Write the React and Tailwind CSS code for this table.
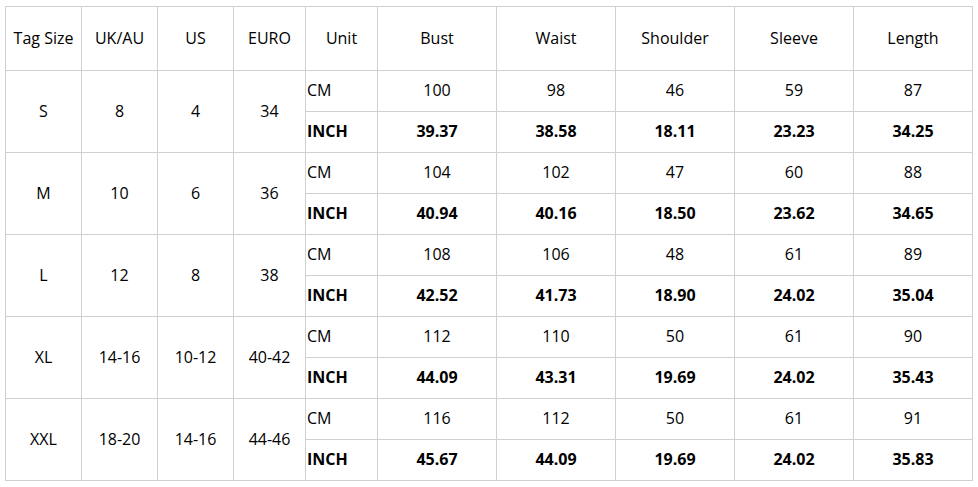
import React from 'react';

const headers = ["Tag Size", "UK/AU", "US", "EURO", "Unit", "Bust", "Waist", "Shoulder", "Sleeve", "Length"];

const sizes = [
  { tag: "S", uk: "8", us: "4", euro: "34", cm: ["100", "98", "46", "59", "87"], inch: ["39.37", "38.58", "18.11", "23.23", "34.25"] },
  { tag: "M", uk: "10", us: "6", euro: "36", cm: ["104", "102", "47", "60", "88"], inch: ["40.94", "40.16", "18.50", "23.62", "34.65"] },
  { tag: "L", uk: "12", us: "8", euro: "38", cm: ["108", "106", "48", "61", "89"], inch: ["42.52", "41.73", "18.90", "24.02", "35.04"] },
  { tag: "XL", uk: "14-16", us: "10-12", euro: "40-42", cm: ["112", "110", "50", "61", "90"], inch: ["44.09", "43.31", "19.69", "24.02", "35.43"] },
  { tag: "XXL", uk: "18-20", us: "14-16", euro: "44-46", cm: ["116", "112", "50", "61", "91"], inch: ["45.67", "44.09", "19.69", "24.02", "35.83"] },
];

const cell = "border-l border-t border-[#d0d0d0] flex items-center justify-center pb-[2px]";

export default function App() {
  return (
    <div className="w-[978px] h-[487px] bg-white overflow-hidden pt-[6px] pl-[5px]" style={{ fontFamily: '"Open Sans", "Noto Sans", sans-serif' }}>
      <div className="grid grid-cols-[76px_76px_76px_72px_72px_119px_119px_119px_119px_119px] grid-rows-[64px_repeat(10,41px)] w-[968px] border-r border-b border-[#d0d0d0] text-[16px] text-black">
        {headers.map((h) => (
          <div key={h} className={cell}>{h}</div>
        ))}
        {sizes.map((s) => (
          <React.Fragment key={s.tag}>
            <div className={`${cell} row-span-2`}>{s.tag}</div>
            <div className={`${cell} row-span-2`}>{s.uk}</div>
            <div className={`${cell} row-span-2`}>{s.us}</div>
            <div className={`${cell} row-span-2`}>{s.euro}</div>
            <div className="border-l border-t border-[#d0d0d0] flex items-center pl-px pb-[2px]">CM</div>
            {s.cm.map((v, i) => (
              <div key={"c" + i} className={cell}>{v}</div>
            ))}
            <div className="border-l border-t border-[#d0d0d0] flex items-center pl-px pb-[2px] font-bold">INCH</div>
            {s.inch.map((v, i) => (
              <div key={"i" + i} className={`${cell} font-bold`}>{v}</div>
            ))}
          </React.Fragment>
        ))}
      </div>
    </div>
  );
}
